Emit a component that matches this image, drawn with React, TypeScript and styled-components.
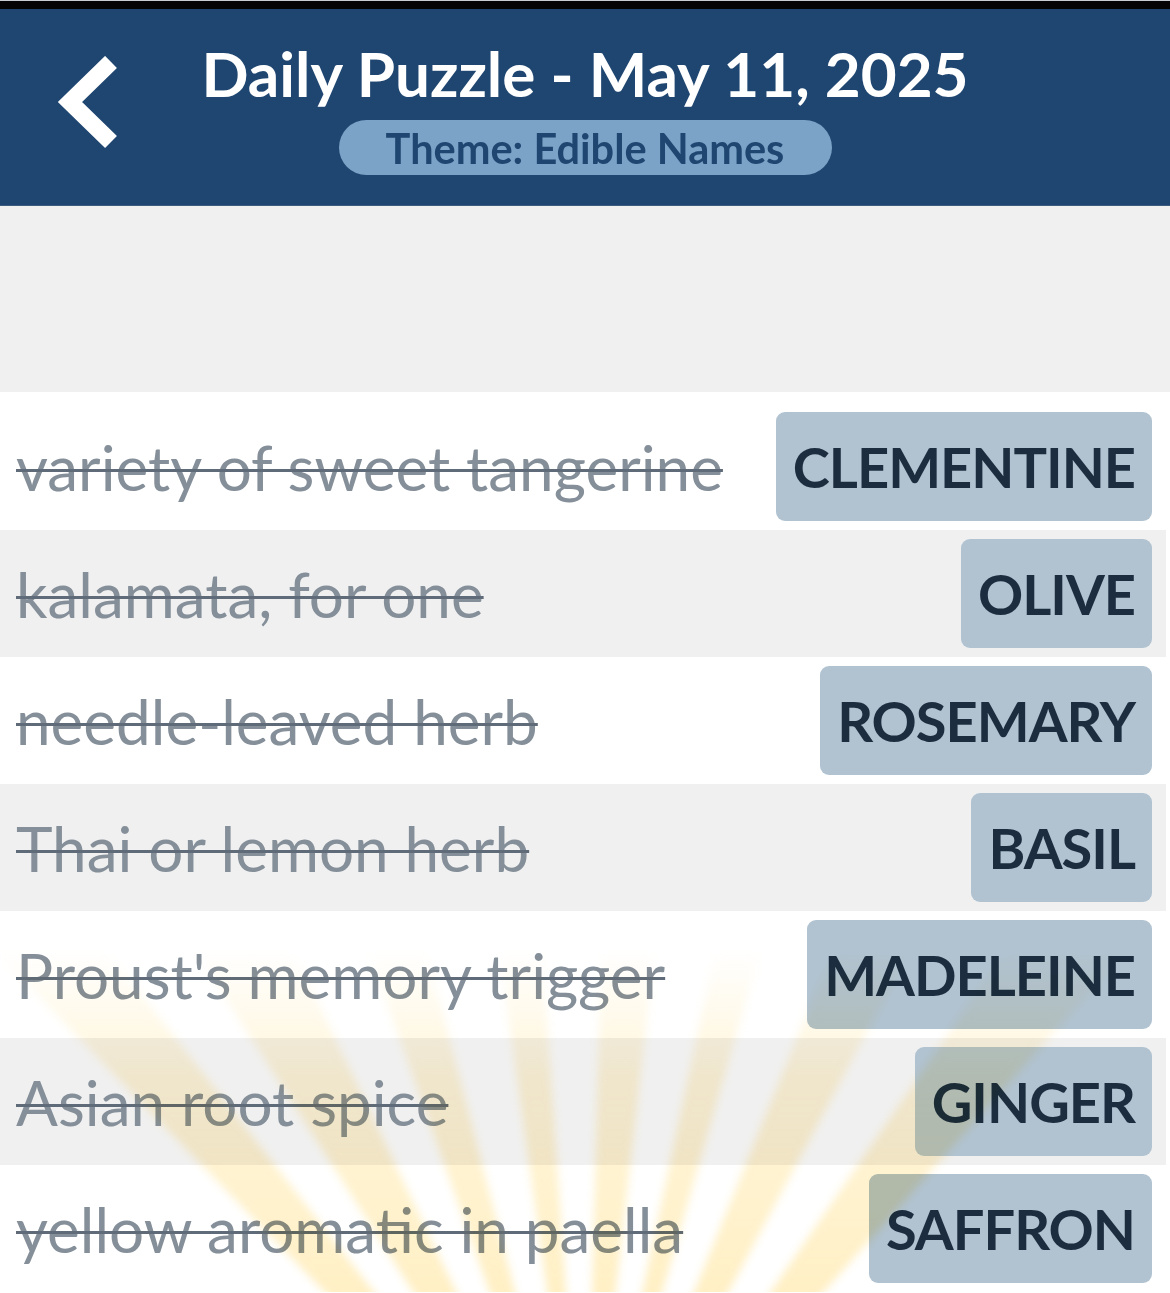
import React from "react";
import styled, { createGlobalStyle } from "styled-components";

const GlobalStyle = createGlobalStyle`
  html, body {
    margin: 0;
    padding: 0;
    background: #ffffff;
  }
  body {
    font-family: "Lato", "Noto Sans", sans-serif;
    -webkit-font-smoothing: antialiased;
  }
`;

const Page = styled.div`
  width: 1170px;
  height: 1293px;
  overflow: hidden;
  display: flex;
  flex-direction: column;
  background: #ffffff;
`;

const StatusStrip = styled.div`
  height: 8px;
  flex: none;
  background: #050505;
  border-top: 1px solid #c9ced3;
`;

const Header = styled.header`
  flex: none;
  height: 197px;
  box-sizing: border-box;
  background: #1f4670;
  border-bottom: 1px solid #3a5a7e;
  display: grid;
  grid-template-columns: 1fr auto 1fr;
  align-items: start;
  padding-top: 25px;
`;

const BackButton = styled.button`
  justify-self: start;
  margin: 22px 0 0 57px;
  padding: 0;
  border: 0;
  background: none;
  width: 72px;
  height: 96px;
  display: flex;
  align-items: center;
  justify-content: center;
  cursor: pointer;
`;

const TitleBlock = styled.div`
  display: flex;
  flex-direction: column;
  align-items: center;
`;

const Title = styled.h1`
  margin: 0;
  color: #ffffff;
  font-size: 62px;
  line-height: 78px;
  font-weight: 700;
  white-space: nowrap;
`;

const ThemePill = styled.div`
  margin-top: 8px;
  width: 493px;
  height: 55px;
  border-radius: 28px;
  background: #7aa3c7;
  color: #1f4670;
  font-size: 41.5px;
  font-weight: 700;
  display: flex;
  align-items: center;
  justify-content: center;
  white-space: nowrap;
`;

const Spacer = styled.div`
  flex: none;
  height: 186px;
  background: #f0f0f0;
`;

const ClueList = styled.ul`
  position: relative;
  margin: 0;
  padding: 11px 0 0;
  list-style: none;
  width: 1166px;
  background: #ffffff;
`;

const ClueRow = styled.li<{ $shaded: boolean }>`
  height: 127px;
  box-sizing: border-box;
  display: flex;
  align-items: center;
  justify-content: space-between;
  padding: 0 14px 0 16px;
  background: ${(p) => (p.$shaded ? "#f0f0f0" : "#ffffff")};
`;

const ClueText = styled.span`
  font-size: 62px;
  font-weight: 400;
  color: #858f99;
  text-decoration: line-through;
  text-decoration-color: #5f6b78;
  text-decoration-thickness: 3px;
  white-space: nowrap;
`;

const AnswerChip = styled.span`
  height: 109px;
  box-sizing: border-box;
  padding: 0 17px;
  border-radius: 9px;
  background: #b1c3d1;
  color: #1b2d3f;
  font-size: 56px;
  letter-spacing: -1px;
  font-weight: 700;
  display: flex;
  align-items: center;
  white-space: nowrap;
`;

const Sunburst = styled.svg`
  position: absolute;
  inset: 0;
  width: 100%;
  height: 100%;
  pointer-events: none;
  mix-blend-mode: multiply;
`;

const clues = [
  { clue: "variety of sweet tangerine", answer: "CLEMENTINE" },
  { clue: "kalamata, for one", answer: "OLIVE" },
  { clue: "needle-leaved herb", answer: "ROSEMARY" },
  { clue: "Thai or lemon herb", answer: "BASIL" },
  { clue: "Proust's memory trigger", answer: "MADELEINE" },
  { clue: "Asian root spice", answer: "GINGER" },
  { clue: "yellow aromatic in paella", answer: "SAFFRON" },
];

// Ray wedges fanning out from below the list: angle from vertical and half-width, in degrees
const rays: [number, number][] = [
  [-41, 3],
  [-29, 3.5],
  [-17, 2.5],
  [-6, 2],
  [4, 2.5],
  [14, 2],
  [25, 3],
  [38, 3.5],
];

const CX = 585;
const CY = 1170;
const R = 1100;

function wedge(angle: number, half: number): string {
  const toXY = (deg: number) => {
    const rad = (deg * Math.PI) / 180;
    return `${(CX + Math.sin(rad) * R).toFixed(1)},${(CY - Math.cos(rad) * R).toFixed(1)}`;
  };
  return `M${CX},${CY} L${toXY(angle - half)} L${toXY(angle + half)} Z`;
}

function SunburstRays() {
  return (
    <Sunburst viewBox="0 0 1166 900" preserveAspectRatio="none">
      <defs>
        <linearGradient id="rayFade" x1="0" y1="0" x2="0" y2="900" gradientUnits="userSpaceOnUse">
          <stop offset="0" stopColor="#ffffff" stopOpacity="0" />
          <stop offset="0.62" stopColor="#ffffff" stopOpacity="0" />
          <stop offset="0.76" stopColor="#ffffff" stopOpacity="0.65" />
          <stop offset="1" stopColor="#ffffff" stopOpacity="1" />
        </linearGradient>
        <mask id="rayMask" maskUnits="userSpaceOnUse" x="0" y="0" width="1166" height="900">
          <rect x="0" y="0" width="1166" height="900" fill="url(#rayFade)" />
        </mask>
        <filter id="raySoft" filterUnits="userSpaceOnUse" x="0" y="0" width="1166" height="900">
          <feGaussianBlur stdDeviation="4" />
        </filter>
      </defs>
      <g mask="url(#rayMask)">
        <g filter="url(#raySoft)" fill="#ffd766" opacity="0.38">
          {rays.map(([a, h], i) => (
            <path key={i} d={wedge(a, h)} />
          ))}
        </g>
      </g>
    </Sunburst>
  );
}

export default function App() {
  return (
    <Page>
      <GlobalStyle />
      <StatusStrip />
      <Header>
        <BackButton aria-label="Back">
          <svg width="72" height="96" viewBox="0 0 72 96">
            <polyline
              points="54,6 13,46 54,86"
              fill="none"
              stroke="#ffffff"
              strokeWidth="17"
              strokeLinecap="butt"
              strokeLinejoin="miter"
            />
          </svg>
        </BackButton>
        <TitleBlock>
          <Title>Daily Puzzle - May 11, 2025</Title>
          <ThemePill>Theme: Edible Names</ThemePill>
        </TitleBlock>
        <div />
      </Header>
      <Spacer />
      <ClueList>
        {clues.map((c, i) => (
          <ClueRow key={c.answer} $shaded={i % 2 === 1}>
            <ClueText>{c.clue}</ClueText>
            <AnswerChip>{c.answer}</AnswerChip>
          </ClueRow>
        ))}
        <SunburstRays />
      </ClueList>
    </Page>
  );
}
